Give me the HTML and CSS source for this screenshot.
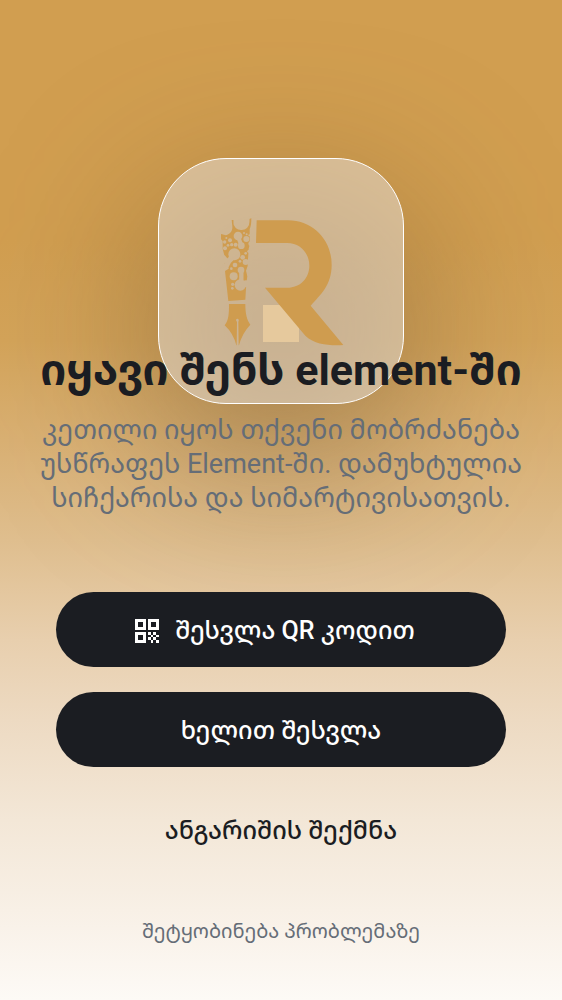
FILE: index.html
```
<!DOCTYPE html>
<html lang="ka">
<head>
<meta charset="utf-8">
<meta name="viewport" content="width=device-width, initial-scale=1">
<title>Element</title>
<link rel="stylesheet" href="styles.css">
</head>
<body>
<main class="screen">
  <div class="logo">
    <svg class="logo-mark" viewBox="0 0 426 426" aria-hidden="true">
      <defs>
        <mask id="bubbles" maskUnits="userSpaceOnUse" x="0" y="0" width="426" height="426">
          <rect width="426" height="426" fill="#fff"/>
          <g fill="#000" stroke="#000" stroke-width="0">
            <path d="M71 20V36C71 51 80 60 94 60S117 51 118 36V20Z"/>
            <circle cx="84" cy="78" r="13"/>
            <circle cx="94" cy="107" r="10"/>
            <path fill="none" stroke-width="12" d="M86 84L93 104"/>
            <circle cx="73" cy="133" r="18"/>
            <path fill="none" stroke-width="17" d="M72 138L56 153L48 168"/>
            <circle cx="36" cy="146" r="12"/>
            <circle cx="38" cy="168" r="8"/>
            <circle cx="109" cy="87" r="9"/>
            <circle cx="122" cy="101" r="7"/>
            <circle cx="102" cy="69" r="3"/>
            <circle cx="110" cy="73" r="3"/>
            <circle cx="118" cy="76" r="3"/>
            <circle cx="60" cy="91" r="6"/>
            <circle cx="49" cy="84" r="3"/>
            <circle cx="44" cy="96" r="5"/>
            <circle cx="65" cy="104" r="5"/>
            <circle cx="54" cy="106" r="4"/>
            <circle cx="77" cy="104" r="6"/>
            <circle cx="45" cy="115" r="6"/>
            <circle cx="98" cy="142" r="7"/>
            <circle cx="107" cy="130" r="4"/>
            <circle cx="117" cy="124" r="5"/>
            <circle cx="90" cy="154" r="4"/>
            <circle cx="107" cy="156" r="9"/>
            <circle cx="75" cy="165" r="7"/>
            <circle cx="64" cy="176" r="4"/>
            <circle cx="93" cy="180" r="10"/>
            <circle cx="91" cy="225" r="17"/>
            <path fill="none" stroke-width="13" d="M94 183V220"/>
            <circle cx="108" cy="221" r="10"/>
            <circle cx="71" cy="199" r="12"/>
            <circle cx="68" cy="223" r="5"/>
            <circle cx="67" cy="235" r="4"/>
            <circle cx="118" cy="193" r="7"/>
            <circle cx="116" cy="178" r="5"/>
          </g>
        </mask>
      </defs>
      <path class="logo-tile" d="M159 285H267V396H159Z"/>
      <path d="M140 31H234C310 31 365 91 365 164C365 226 331 254 302 287L400 405C360 407 316 405 286 377L165 233H232C270 233 298 205 298 167S270 99 232 99H138Z"/>
      <path mask="url(#bubbles)" d="M65 30H71V45L94 60L117 45L118 27L124 25C124 40 123 48 119 58V104L116 116L114 148L113 168L108 182L112 198L110 214L108 235L106 269L55 273L51 237L45 183L56 176Q57 164 43 163L42 160Q55 156 52 145L43 136L38 116V93L33 88V72L48 76C61 71 68 62 67 49Z"/>
      <path d="M57 282H106C106 314 111 330 121 344Q96 370 87 406H86L85 335Q88 332 85 327Q81 324 78 329Q78 333 81 335L80 406H79Q70 370 44 346C56 330 57 312 57 282Z"/>
    </svg>
  </div>
  <h1 class="title">იყავი შენს element-ში</h1>
  <p class="subtitle">კეთილი იყოს თქვენი მობრძანება უსწრაფეს Element-ში. დამუხტულია სიჩქარისა და სიმარტივისათვის.</p>
  <div class="actions">
    <button class="btn btn-primary btn-with-icon" type="button">
      <svg class="qr" viewBox="0 0 24 24" aria-hidden="true">
        <path fill-rule="evenodd" d="M0 0H11V11H0ZM3 3V8H8V3ZM13 0H24V11H13ZM16 3V8H21V3ZM0 13H11V24H0ZM3 16V21H8V16Z"/>
        <path d="M13 13H16V16H13ZM18 13H21V16H18ZM16 16H18V18H16ZM21 16H24V18H21ZM13 18H16V21H13ZM18 18H21V21H18ZM16 21H18V24H16ZM21 21H24V24H21Z"/>
      </svg>
      <span>შესვლა QR კოდით</span>
    </button>
    <button class="btn btn-primary" type="button">ხელით შესვლა</button>
    <button class="btn btn-text" type="button">ანგარიშის შექმნა</button>
  </div>
  <button class="report" type="button">შეტყობინება პრობლემაზე</button>
</main>
</body>
</html>
```
FILE: styles.css
```
* {
  box-sizing: border-box;
}

body {
  margin: 0;
  font-family: Roboto, "Noto Sans Georgian", "Noto Sans", "DejaVu Sans", sans-serif;
  color: #1b1d22;
}

button {
  font: inherit;
  color: inherit;
  border: 0;
  background: none;
  padding: 0;
  cursor: pointer;
}

.screen {
  min-height: 100vh;
  padding: 158px 24px 48px;
  display: flex;
  flex-direction: column;
  align-items: center;
  position: relative;
  z-index: 0;
  overflow: hidden;
  background: linear-gradient(#d19e50 0%, #d19e50 24%, #d3a359 34%, #d9b073 44%, #dfbe8e 54%, #e8cfae 64%, #eddac2 72%, #f3e7d7 82%, #f8f0e6 91%, #fdfaf6 100%);
}

.logo {
  width: 246px;
  aspect-ratio: 1;
  display: grid;
  place-items: center;
  position: relative;
  border: 1px solid #fff;
  border-radius: 68px;
  background: rgba(231, 222, 214, 0.52);
}

.logo::before {
  content: "";
  position: absolute;
  inset: 0;
  z-index: -1;
  border-radius: 68px;
  background: rgba(92, 68, 36, 0.46);
  filter: blur(85px);
  transform: translateY(48px);
}

.logo-mark {
  width: 142px;
  height: 142px;
  fill: #cf9c4f;
}

.logo-tile {
  fill: #e6c99d;
}

.title {
  position: relative;
  margin: -60px 0 0;
  font-size: 43px;
  line-height: 52px;
  font-weight: 700;
  text-align: center;
}

.subtitle {
  margin: 17px 0 0;
  font-size: 27px;
  line-height: 34px;
  color: #656d77;
  text-align: center;
}

.actions {
  align-self: stretch;
  display: grid;
  gap: 25px;
  margin: 77px 32px 0;
}

.btn {
  height: 75px;
  display: flex;
  align-items: center;
  justify-content: center;
  gap: 16px;
  padding-top: 2px;
  font-size: 25px;
  line-height: 34px;
  font-weight: 500;
}

.btn-primary {
  border-radius: 38px;
  background: #1b1d22;
  color: #fff;
}

.btn-with-icon {
  padding-right: 12px;
}

.qr {
  width: 24px;
  height: 24px;
  fill: currentColor;
}

.report {
  margin-top: 50px;
  font-size: 20px;
  line-height: 28px;
  color: #656d77;
}
```
